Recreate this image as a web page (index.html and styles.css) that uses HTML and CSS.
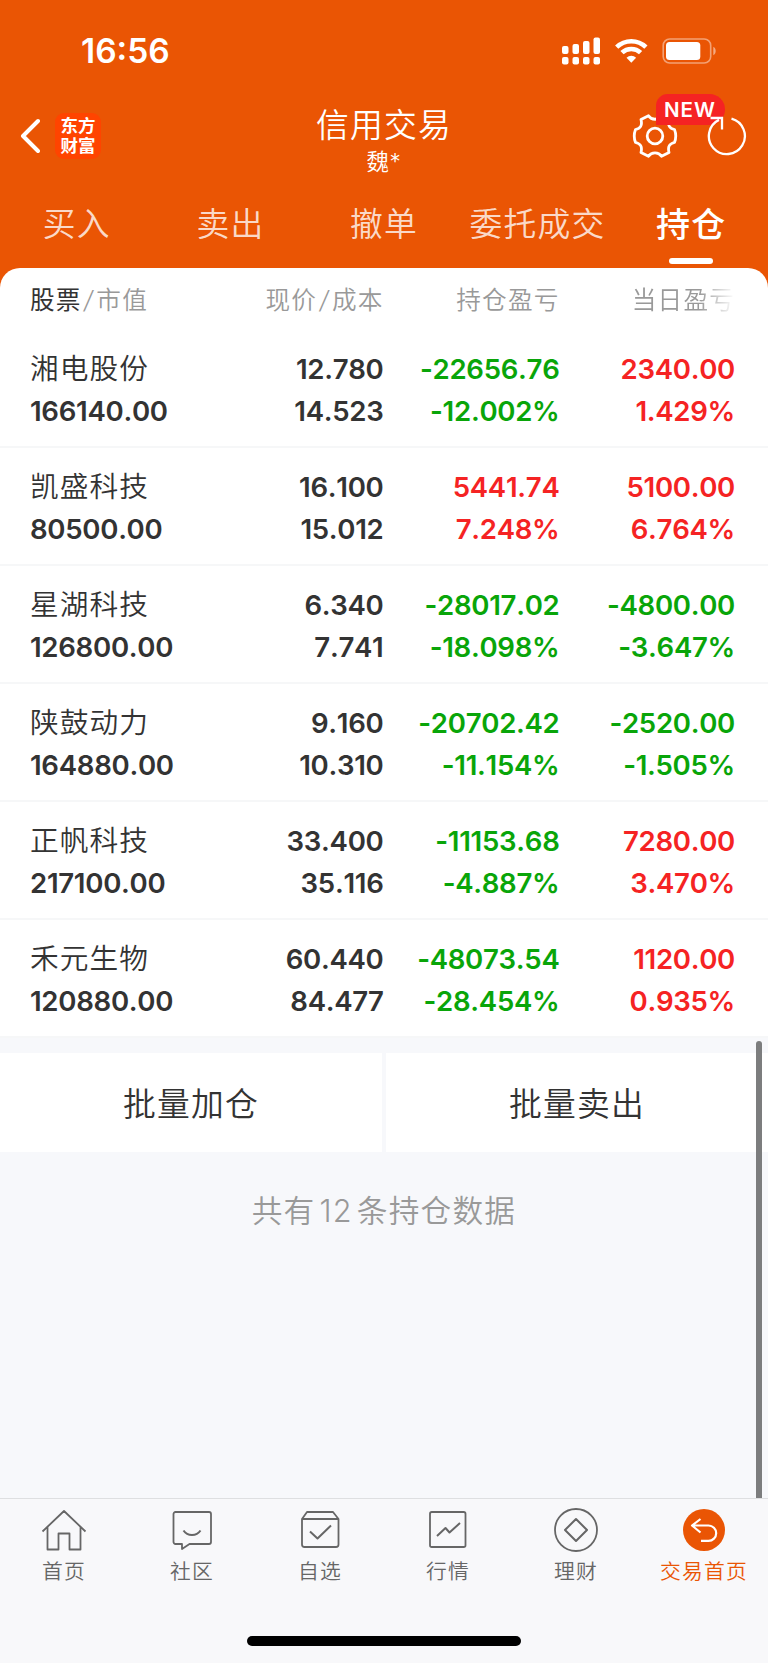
FILE: index.html
```html
<!DOCTYPE html>
<html lang="zh-CN">
<head>
  <meta charset="UTF-8" />
  <meta name="viewport" content="width=device-width, initial-scale=1" />
  <title>信用交易 - 持仓</title>
  <link rel="stylesheet" href="styles.css">
</head>
<body>

  <header class="header">
    <div class="status-bar">
      <span class="time">16:56</span>
      <svg class="status-icons" width="156" height="28" viewBox="0 0 156 28" fill="#fff">
        <rect x="0" y="9" width="6.5" height="8" rx="2" />
        <rect x="10.5" y="7" width="6.5" height="10" rx="2" />
        <rect x="21" y="4" width="6.5" height="13" rx="2" />
        <rect x="31.5" y="0.5" width="6.5" height="16.5" rx="2" />
        <rect x="0" y="20" width="6.5" height="7.5" rx="2" />
        <rect x="10.5" y="20" width="6.5" height="7.5" rx="2" />
        <rect x="21" y="20" width="6.5" height="7.5" rx="2" />
        <rect x="31.5" y="20" width="6.5" height="7.5" rx="2" />
        <g fill="none" stroke="#fff" stroke-width="4.6">
          <path d="M54.7 10.2a21 21 0 0 1 29.2 0" />
          <path d="M60 15.7a13.4 13.4 0 0 1 18.6 0" />
        </g>
        <path d="M64.5 20.7a7.2 7.2 0 0 1 9.6 0l-4.8 5z" />
        <rect x="101.2" y="2" width="47.5" height="24" rx="6.5" fill="none" stroke="#fff" stroke-opacity=".45" stroke-width="1.6" />
        <rect x="104" y="5" width="34.3" height="18" rx="3.5" />
        <path d="M151.3 9.8c3.2 1.5 3.2 7 0 8.400z" opacity=".5" />
      </svg>
    </div>

    <div class="nav-bar">
      <div class="nav-left">
        <svg width="20" height="36" viewBox="0 0 20 36" fill="none" stroke="#fff" stroke-width="4" stroke-linecap="round" stroke-linejoin="round">
          <path d="M18 3L3 18l15 15" />
        </svg>
        <div class="logo"><span>东方</span><span>财富</span></div>
      </div>
      <div class="nav-title">
        <h1>信用交易</h1>
        <p>魏*</p>
      </div>
      <div class="nav-right">
        <svg width="46" height="46" viewBox="-23 -23 46 46" fill="none" stroke="#fff" stroke-width="2.8" stroke-linejoin="round">
          <path d="M-6.500 -20.300L-14 -16.500C-12.500 -10.500 -14.500 -7.500 -19.500 -6.500Q-22 0 -19.500 6.500C-14.500 7.500 -12.500 10.500 -14 16.500L-6.500 20.300C-3.500 15.600 3.500 15.600 6.500 20.300L14 16.500C12.500 10.500 14.500 7.500 19.500 6.500Q22 0 19.500 -6.500C14.500 -7.500 12.500 -10.500 14 -16.500L6.500 -20.300C3.500 -15.600 -3.500 -15.600 -6.500 -20.300Z" />
          <circle r="7.800" />
        </svg>
        <span class="badge">NEW</span>
        <svg class="refresh" width="42" height="42" viewBox="-21 -21 42 42" fill="none" stroke="#fff" stroke-width="2.3">
          <path d="M4.500 -17.300A18 18 0 1 1 -8 -16.100" />
          <path d="M-16.500 -18H-5V-6.500" />
        </svg>
      </div>
    </div>

    <nav class="tabs">
      <a>买入</a>
      <a>卖出</a>
      <a>撤单</a>
      <a>委托成交</a>
      <a class="active">持仓</a>
    </nav>
  </header>

  <main class="content">
    <section class="positions">
      <div class="row row-head">
        <div><b>股票</b><i>/</i>市值</div>
        <div>现价<i>/</i>成本</div>
        <div>持仓盈亏</div>
        <div class="fade">当日盈亏</div>
      </div>
      <div class="row">
        <div><span class="name">湘电股份</span><span>166140.00</span></div>
        <div><span>12.780</span><span>14.523</span></div>
        <div class="down"><span>-22656.76</span><span>-12.002%</span></div>
        <div class="up"><span>2340.00</span><span>1.429%</span></div>
      </div>
      <div class="row">
        <div><span class="name">凯盛科技</span><span>80500.00</span></div>
        <div><span>16.100</span><span>15.012</span></div>
        <div class="up"><span>5441.74</span><span>7.248%</span></div>
        <div class="up"><span>5100.00</span><span>6.764%</span></div>
      </div>
      <div class="row">
        <div><span class="name">星湖科技</span><span>126800.00</span></div>
        <div><span>6.340</span><span>7.741</span></div>
        <div class="down"><span>-28017.02</span><span>-18.098%</span></div>
        <div class="down"><span>-4800.00</span><span>-3.647%</span></div>
      </div>
      <div class="row">
        <div><span class="name">陕鼓动力</span><span>164880.00</span></div>
        <div><span>9.160</span><span>10.310</span></div>
        <div class="down"><span>-20702.42</span><span>-11.154%</span></div>
        <div class="down"><span>-2520.00</span><span>-1.505%</span></div>
      </div>
      <div class="row">
        <div><span class="name">正帆科技</span><span>217100.00</span></div>
        <div><span>33.400</span><span>35.116</span></div>
        <div class="down"><span>-11153.68</span><span>-4.887%</span></div>
        <div class="up"><span>7280.00</span><span>3.470%</span></div>
      </div>
      <div class="row">
        <div><span class="name">禾元生物</span><span>120880.00</span></div>
        <div><span>60.440</span><span>84.477</span></div>
        <div class="down"><span>-48073.54</span><span>-28.454%</span></div>
        <div class="up"><span>1120.00</span><span>0.935%</span></div>
      </div>
    </section>

    <div class="actions">
      <button>批量加仓</button>
      <button>批量卖出</button>
    </div>
    <p class="total">共有<span>12</span>条持仓数据</p>
    <div class="scrollbar"></div>
  </main>

  <footer class="tab-bar">
    <a>
      <svg width="46" height="46" viewBox="0 0 46 46">
        <path d="M1.500 24.500L23 4l21.500 20.500M6.500 20v22.500H17.500V26.500H28.500V42.500H39.500V20" />
      </svg>
      首页
    </a>
    <a>
      <svg width="46" height="46" viewBox="0 0 46 46">
        <path d="M6.500 5H40a2 2 0 0 1 2 2V35a2 2 0 0 1 -2 2H20.500L13 42V37H6.500a2 2 0 0 1 -2 -2V7a2 2 0 0 1 2 -2z" />
        <path d="M14.500 23.500c4 6 13 6 17 0" stroke-width="2" />
      </svg>
      社区
    </a>
    <a>
      <svg width="46" height="46" viewBox="0 0 46 46">
        <path d="M5 12L10 5H36L41.500 12V37.500a2.500 2.500 0 0 1 -2.500 2.500H7.500a2.500 2.500 0 0 1 -2.500 -2.500zM5 12H41.500" />
        <path d="M13 24.500l7.500 7L34 18.500" stroke-width="2" />
      </svg>
      自选
    </a>
    <a>
      <svg width="46" height="46" viewBox="0 0 46 46">
        <rect x="5" y="5" width="35.500" height="35" rx="1.800" />
        <path d="M12 29l8.500-8 4 4.500L35 16" stroke-width="2" />
      </svg>
      行情
    </a>
    <a>
      <svg width="46" height="46" viewBox="0 0 46 46">
        <circle cx="23" cy="23" r="21" />
        <path d="M23 12L34 23 23 34 12 23z" stroke-width="2" />
      </svg>
      理财
    </a>
    <a class="active">
      <svg width="46" height="46" viewBox="0 0 46 46">
        <circle class="disc" cx="23" cy="23" r="21" />
        <path class="arrow" d="M19.500 12L11 18.500 19.500 25.500M11 18.500H27.500a7.700 7.700 0 0 1 0 15.400H20" />
      </svg>
      交易首页
    </a>
    <div class="home-indicator"></div>
  </footer>

</body>
</html>
```
FILE: styles.css
```css
* {
  box-sizing: border-box;
}
body {
  margin: 0;
  height: 1663px;
  display: flex;
  flex-direction: column;
  background: #f7f8fb;
  color: #333;
  font-family: Inter, "Noto Sans CJK SC", sans-serif;
  overflow: hidden;
}
.header {
  height: 288px;
  background: #ea5504;
  color: #fff;
}
.status-bar {
  height: 94px;
  padding: 8px 50px 0 81px;
  display: flex;
  justify-content: space-between;
  align-items: center;
}
.time {
  font-size: 33.500px;
  font-weight: 600;
}
.nav-bar {
  height: 84px;
  display: grid;
  grid-template-columns: 1fr auto 1fr;
  align-items: center;
}
.nav-left {
  display: flex;
  align-items: center;
  padding-left: 20px;
  gap: 15px;
}
.logo {
  width: 46px;
  height: 46px;
  padding-top: 2px;
  border-radius: 9px;
  background: #ff4400;
  font-family: "Noto Sans CJK SC", sans-serif;
  font-size: 17.500px;
  font-weight: 700;
  line-height: 19.500px;
  text-align: center;
}
.logo span {
  display: block;
}
.nav-title {
  text-align: center;
}
.nav-title h1 {
  margin: 10px 0 0;
  font-size: 32.800px;
  font-weight: 350;
  line-height: 42px;
  letter-spacing: 1.200px;
}
.nav-title p {
  margin: 0;
  font-size: 22.500px;
  font-weight: 350;
  line-height: 32px;
  letter-spacing: .6px;
}
.nav-right {
  position: relative;
  display: flex;
  justify-content: flex-end;
  align-items: center;
  gap: 28px;
  padding-right: 20.500px;
}
.badge {
  position: absolute;
  top: -19px;
  right: 43.500px;
  width: 69px;
  height: 31px;
  border-radius: 12px 16px 16px 0;
  background: #f52323;
  font-size: 20.500px;
  font-weight: 600;
  line-height: 31px;
  letter-spacing: 1px;
  text-align: center;
}
.refresh {
  position: relative;
}
.tabs {
  display: grid;
  grid-template-columns: repeat(5, 1fr);
  height: 90px;
}
.tabs a {
  position: relative;
  font-size: 32.800px;
  font-weight: 350;
  line-height: 93px;
  letter-spacing: 1.200px;
  text-align: center;
  color: rgba(255, 255, 255, .8);
}
.tabs .active {
  font-size: 34px;
  font-weight: 500;
  color: #fff;
}
.tabs .active::after {
  content: "";
  position: absolute;
  left: 55px;
  top: 80px;
  width: 44px;
  height: 6px;
  border-radius: 3px;
  background: #fff;
}
.content {
  position: relative;
  flex: 1;
  margin-top: -20px;
}
.positions {
  border-radius: 20px 20px 0 0;
  background: #fff;
}
.row {
  display: grid;
  grid-template-columns: 177px 176.500px 176px 175.500px;
  height: 118px;
  padding: 18px 0 0 30px;
  border-bottom: 2px solid #f6f7f8;
  font-size: 27.600px;
  font-weight: 600;
  font-kerning: none;
  line-height: 42px;
  letter-spacing: -.3px;
}
.row > div {
  text-align: right;
}
.row > div:first-child {
  text-align: left;
}
.row span {
  display: block;
}
.row .name {
  font-size: 28.700px;
  font-weight: 350;
  letter-spacing: 1.100px;
}
.up {
  color: #f52323;
}
.down {
  color: #09a509;
}
.row-head {
  height: 62px;
  padding-top: 11px;
  border: 0;
  color: #999;
  font-size: 24.600px;
  font-weight: 350;
  letter-spacing: 1.200px;
}
.row-head b {
  color: #333;
  font-weight: 400;
}
.row-head i {
  margin: 0 2.500px;
}
.fade {
  -webkit-mask-image: linear-gradient(to left, transparent, #000 36px);
  mask-image: linear-gradient(to left, transparent, #000 36px);
}
.actions {
  display: grid;
  grid-template-columns: 1fr 1fr;
  gap: 4px;
  margin-top: 15px;
}
.actions button {
  height: 99px;
  padding: 0 0 3px;
  border: 0;
  background: #fff;
  color: #333;
  font-family: inherit;
  font-size: 32.800px;
  font-weight: 350;
  letter-spacing: 1.200px;
}
.total {
  margin: 39px 0 0;
  text-align: center;
  font-size: 30.700px;
  font-weight: 350;
  line-height: 40px;
  letter-spacing: 1.200px;
  color: #999;
}
.total span {
  margin: 0 4px;
}
.scrollbar {
  position: absolute;
  right: 6px;
  top: 773px;
  bottom: 0;
  width: 6px;
  border-radius: 3px 3px 0 0;
  background: #7c7d7e;
}
.tab-bar {
  position: relative;
  display: grid;
  grid-template-columns: repeat(6, 1fr);
  height: 165px;
  padding-top: 8px;
  border-top: 1px solid #dedfe1;
  background: #f8f8fa;
}
.tab-bar a {
  display: flex;
  flex-direction: column;
  align-items: center;
  font-size: 20.800px;
  font-weight: 350;
  line-height: 37px;
  letter-spacing: 1.200px;
  color: #666;
}
.tab-bar svg {
  fill: none;
  stroke: #666;
  stroke-width: 1.800;
  stroke-linejoin: round;
}
.tab-bar .active {
  color: #ea5504;
}
.tab-bar .disc {
  fill: #ea5504;
  stroke: none;
}
.tab-bar .arrow {
  stroke: #fff;
  stroke-width: 2.200;
}
.home-indicator {
  position: absolute;
  left: 247px;
  bottom: 17px;
  width: 274px;
  height: 10px;
  border-radius: 5px;
  background: #000;
}
```
